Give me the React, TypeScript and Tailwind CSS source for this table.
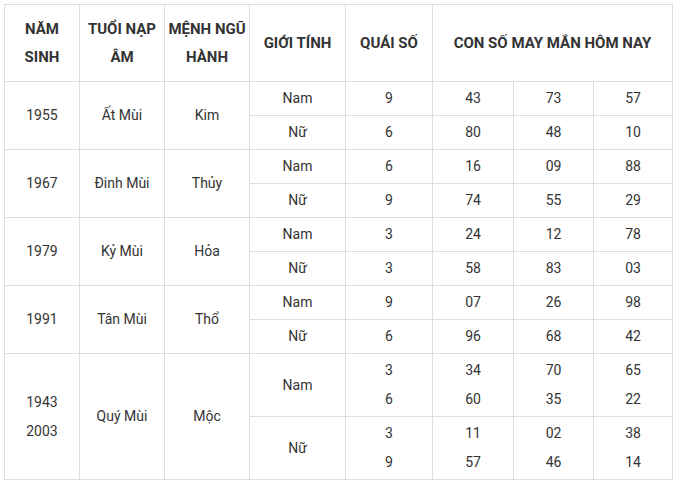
const groups = [
  { year: ['1955'], tuoi: 'Ất Mùi', menh: 'Kim', rows: [
    { g: 'Nam', q: ['9'], n: [['43'], ['73'], ['57']] },
    { g: 'Nữ', q: ['6'], n: [['80'], ['48'], ['10']] },
  ] },
  { year: ['1967'], tuoi: 'Đinh Mùi', menh: 'Thủy', rows: [
    { g: 'Nam', q: ['6'], n: [['16'], ['09'], ['88']] },
    { g: 'Nữ', q: ['9'], n: [['74'], ['55'], ['29']] },
  ] },
  { year: ['1979'], tuoi: 'Kỷ Mùi', menh: 'Hỏa', rows: [
    { g: 'Nam', q: ['3'], n: [['24'], ['12'], ['78']] },
    { g: 'Nữ', q: ['3'], n: [['58'], ['83'], ['03']] },
  ] },
  { year: ['1991'], tuoi: 'Tân Mùi', menh: 'Thổ', rows: [
    { g: 'Nam', q: ['9'], n: [['07'], ['26'], ['98']] },
    { g: 'Nữ', q: ['6'], n: [['96'], ['68'], ['42']] },
  ] },
  { year: ['1943', '2003'], tuoi: 'Quý Mùi', menh: 'Mộc', rows: [
    { g: 'Nam', q: ['3', '6'], n: [['34', '60'], ['70', '35'], ['65', '22']] },
    { g: 'Nữ', q: ['3', '9'], n: [['11', '57'], ['02', '46'], ['38', '14']] },
  ] },
];

const cell = 'border-r border-b border-[#dddddd] flex flex-col items-center justify-center text-center';
const head = `${cell} text-[15px] font-bold whitespace-nowrap`;

const Lines = ({ items }: { items: string[] }) => (
  <>
    {items.map((t, i) => (
      <span key={i} className="block leading-[29px]">{t}</span>
    ))}
  </>
);

export default function App() {
  return (
    <div className="min-h-screen bg-white pt-1 pl-1" style={{ fontFamily: 'Roboto, "Liberation Sans", sans-serif' }}>
      <div className="grid w-max grid-cols-[75px_85px_85px_96px_87px_81px_80px_79px] grid-rows-[77px_repeat(8,34px)_63px_63px] border-l border-t border-[#dddddd] text-[14px] text-[#333333]">
        {/* Header */}
        <div className={`${head} leading-[28px]`}>NĂM<br />SINH</div>
        <div className={`${head} leading-[28px]`}>TUỔI NẠP<br />ÂM</div>
        <div className={`${head} leading-[28px]`}>MỆNH NGŨ<br />HÀNH</div>
        <div className={head}>GIỚI TÍNH</div>
        <div className={head}>QUÁI SỐ</div>
        <div className={`${head} col-span-3`}>CON SỐ MAY MẮN HÔM NAY</div>

        {groups.map((grp) => (
          <div key={grp.tuoi} className="contents">
            <div className={`${cell} row-span-2`}><Lines items={grp.year} /></div>
            <div className={`${cell} row-span-2`}>{grp.tuoi}</div>
            <div className={`${cell} row-span-2`}>{grp.menh}</div>
            {grp.rows.map((r) => (
              <div key={r.g} className="contents">
                <div className={cell}>{r.g}</div>
                <div className={cell}><Lines items={r.q} /></div>
                {r.n.map((col, i) => (
                  <div key={i} className={cell}><Lines items={col} /></div>
                ))}
              </div>
            ))}
          </div>
        ))}
      </div>
    </div>
  );
}
